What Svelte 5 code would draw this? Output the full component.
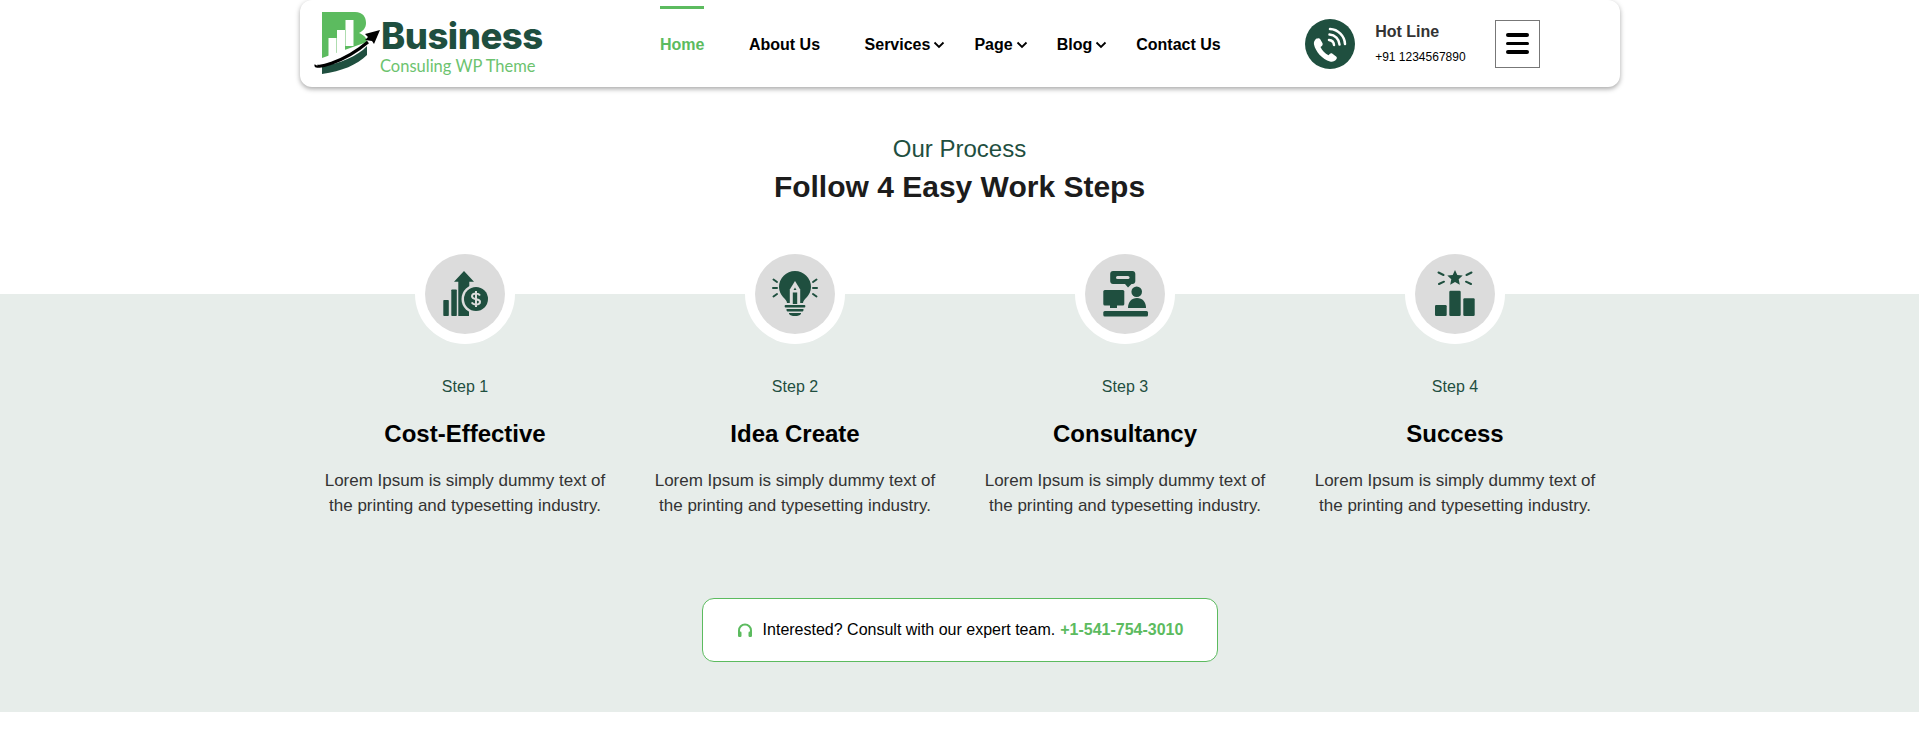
<script>
  const navItems = [
    { label: "Home", active: true },
    { label: "About Us" },
    { label: "Services", sub: true },
    { label: "Page", sub: true },
    { label: "Blog", sub: true },
    { label: "Contact Us" },
  ];

  const steps = [
    { id: 1, title: "Cost-Effective" },
    { id: 2, title: "Idea Create" },
    { id: 3, title: "Consultancy" },
    { id: 4, title: "Success" },
  ];
</script>

<header class="site-header">
  <a class="logo" href="#top" aria-label="Business">
    <svg viewBox="310 8 71 72" width="71" height="72">
      <path class="lg" d="M322 12h33c8 0 11 5 11 11 0 5-3 8-7 10 5 2 8 5 8 9l-45 16z" />
      <rect class="w" x="328.500" y="38" width="8" height="20" />
      <rect class="w" x="337" y="30" width="8" height="24" />
      <rect class="w" x="345.500" y="20" width="8" height="26" />
      <path class="dg" d="M322 74c20-3 35-9 45-19v-9c-9 10-28 18-45 20z" />
      <path class="bk-line" d="M316 65c-2 4 26-1 52-23" />
      <path class="bk" d="M380 30l-15 4 3 3-3 3 7 1 2 3z" />
    </svg>
    <div class="logo-text">
      <span class="brand">Business</span>
      <span class="tag">Consuling WP Theme</span>
    </div>
  </a>

  <nav class="main-nav">
    {#each navItems as item}
      <a class="nav-link" class:active={item.active} class:sub={item.sub} href="#top">
        {item.label}
        {#if item.sub}
          <svg class="chev" viewBox="0 0 12 8" width="12" height="8"><path d="M1.500 1.500L6 6l4.500-4.500" /></svg>
        {/if}
      </a>
    {/each}
  </nav>

  <div class="hotline">
    <span class="phone-badge">
      <svg viewBox="0 0 50 50" width="50" height="50">
        <path class="handset" transform="translate(-3.500 4)" d="M15 15.500c-2 1.500-3 3.500-2.500 6 1.500 7 8.500 15 16 17 2.500.7 5-.3 6.500-2.500.7-1 .4-2-.4-2.600l-3.600-2.600c-1-.7-2-.6-2.800.2l-1.200 1.300c-3.500-1.500-6.500-5-8-8.300l1.400-1.100c.9-.8 1-1.800.5-2.800l-2.300-4c-.6-1-1.700-1.200-2.600-.6z" />
        <path class="arc" d="M24 21c2.800.3 4.800 2.300 5 5" />
        <path class="arc" d="M24.500 15.500c5.500.3 9.700 4.500 10 10" />
        <path class="arc" d="M25 10c8 .3 14.700 7 15 15" />
      </svg>
    </span>
    <div class="hotline-text">
      <strong>Hot Line</strong>
      <span>+91 1234567890</span>
    </div>
    <button class="menu-toggle" aria-label="Menu">
      <i></i><i></i><i></i>
    </button>
  </div>
</header>

<section class="heading">
  <p>Our Process</p>
  <h2>Follow 4 Easy Work Steps</h2>
</section>

<section class="band">
  <div class="steps">
    {#each steps as step}
      <article class="step">
        <div class="ring">
          <div class="disc">
            <svg viewBox="0 0 80 80" width="80" height="80">
              {#if step.id === 1}
                <rect x="18.300" y="46" width="5.500" height="16" rx=".8" />
                <rect x="26.300" y="35.500" width="5.500" height="26.500" rx=".8" />
                <path d="M39 17l10 10.700h-4.700V62h-11V27.700H29z" />
                <circle class="cut" cx="51" cy="45" r="14.500" />
                <path class="cut" d="M44 55h6v8h-6z" />
                <circle cx="51" cy="45" r="12" />
                <path class="dollar" d="M55 41.500c-.8-1.500-2.200-2-4-2-2.300 0-4 1-4 2.800 0 4 8 2 8 5.500 0 1.800-1.800 2.800-4 2.800-2 0-3.400-.7-4.200-2.200M51 37v16" />
              {:else if step.id === 2}
                <path d="M32 49c0-4-8-7-8-16a16 16 0 0 1 32 0c0 9-8 12-8 16z" />
                <path class="cut" d="M40 27l-5.200 8.500V50h10.400V35.500z" />
                <path d="M40 33.500l-1.500 2.500h3zM37.800 38.500h4.400V50h-4.400z" />
                <path d="M30.500 51h19c.5 0 .8.400.8.800v1c0 .5-.3.800-.8.800h-19c-.5 0-.8-.3-.8-.8v-1c0-.4.300-.8.800-.8zM32 55h16c.4 0 .7.300.6.700l-.4 1.400c-.1.300-.4.500-.7.500H32.500c-.3 0-.6-.2-.7-.5l-.4-1.400c-.1-.4.200-.7.600-.7zM34.500 59h11c.5 0 .7.500.4.900-1 1.300-3 2.100-5.900 2.100s-4.900-.8-5.900-2.100c-.3-.4-.1-.9.400-.9z" />
                <path class="ray" d="M18.500 25.500l3.500 2.500M18 34h4M18.500 42.500l3.500-2.500M61.500 25.500L58 28M62 34h-4M61.500 42.500L58 40" />
              {:else if step.id === 3}
                <path d="M28 17h19.500c1.600 0 2.800 1.200 2.800 2.800v7.400c0 1.600-1.200 2.800-2.800 2.800H46.500L43 33.500 40 30H28c-1.600 0-2.800-1.200-2.800-2.800v-7.400c0-1.600 1.200-2.800 2.800-2.800z" />
                <rect class="cut" x="31" y="22" width="13.500" height="3" rx="1.500" />
                <rect x="18.300" y="36" width="21" height="15.500" rx="1.500" />
                <path d="M25 50h7v4h-7z" />
                <circle cx="51.700" cy="37.700" r="5.300" />
                <path d="M43 54c0-6 3.500-10 9-10s9 4 9 10z" />
                <rect x="18.300" y="57" width="44.700" height="5.500" rx="1.500" />
              {:else}
                <path d="M40 16l2.300 5 5.400.6-4 3.700 1.100 5.400-4.800-2.700-4.800 2.700 1.100-5.400-4-3.700 5.400-.6z" />
                <path class="ray" d="M23.500 18.500l5 2.500M24 30l5-2.300M56.500 18.500l-5 2.500M56 30l-5-2.300" />
                <rect x="20" y="51" width="11.700" height="11" rx="1.200" />
                <rect x="34.300" y="36.700" width="11.400" height="25.300" rx="1.200" />
                <rect x="48.300" y="44.300" width="11.400" height="17.700" rx="1.200" />
              {/if}
            </svg>
          </div>
        </div>
        <span class="step-no">Step {step.id}</span>
        <h3>{step.title}</h3>
        <p>Lorem Ipsum is simply dummy text of the printing and typesetting industry.</p>
      </article>
    {/each}
  </div>

  <div class="cta">
    <svg class="headset" viewBox="0 0 16 16" width="16" height="16">
      <path class="band-arc" d="M2 11V8.500a6 6 0 0 1 12 0V11" />
      <rect x="1" y="9.500" width="3.500" height="5.500" rx="1.200" />
      <rect x="11.500" y="9.500" width="3.500" height="5.500" rx="1.200" />
    </svg>
    <span>Interested? Consult with our expert team.</span>
    <a href="#top">+1-541-754-3010</a>
  </div>
</section>

<style>
  :global(body) {
    background: #fff;
    font-family: "Liberation Sans", Arial, sans-serif;
    color: #000;
  }

  .site-header {
    width: 1320px;
    height: 87px;
    margin: 0 0 0 300px;
    box-sizing: border-box;
    display: flex;
    align-items: center;
    background: #fff;
    border-radius: 12px;
    box-shadow: 0 2px 5px rgba(0, 0, 0, 0.35);
  }

  .logo {
    display: flex;
    width: 240px;
    height: 72px;
    margin-left: 10px;
    margin-top: 1px;
    flex: none;
    text-decoration: none;
  }

  .logo svg {
    display: block;
    flex: none;
  }

  .logo-text {
    display: flex;
    flex-direction: column;
    gap: 5px;
    padding-top: 13px;
  }

  .lg {
    fill: #5cbb5f;
  }

  .w {
    fill: #fff;
  }

  .dg {
    fill: #1f4f3f;
  }

  .bk {
    fill: #000;
  }

  .bk-line {
    fill: none;
    stroke: #000;
    stroke-width: 3;
  }

  .brand {
    font-family: Inter, sans-serif;
    font-weight: 800;
    font-size: 36.500px;
    line-height: 30px;
    letter-spacing: -0.5px;
    color: #1f4f3f;
  }

  .tag {
    margin-left: -1px;
    font-family: Lato, sans-serif;
    font-weight: 400;
    font-size: 16.500px;
    line-height: 20px;
    color: #6cc36f;
  }

  .main-nav {
    display: flex;
    align-items: stretch;
    height: 87px;
    margin-left: 110px;
    flex: none;
  }

  .nav-link {
    display: flex;
    align-items: center;
    gap: 3px;
    margin-right: 44.500px;
    font-size: 16px;
    font-weight: 700;
    color: #000;
    text-decoration: none;
    border-top: 3px solid transparent;
    box-sizing: border-box;
    margin-top: 6px;
    height: 75px;
    padding-bottom: 1px;
  }

  .nav-link.sub {
    margin-right: 29px;
  }

  .nav-link.active {
    color: #5cbb5f;
    border-top-color: #5cbb5f;
  }

  .chev {
    margin-top: 1px;
  }

  .chev path {
    fill: none;
    stroke: #000;
    stroke-width: 1.800;
  }

  .hotline {
    display: flex;
    align-items: center;
    margin-left: 40px;
  }

  .phone-badge {
    width: 50px;
    height: 50px;
    border-radius: 50%;
    background: #1f4f3f;
    flex: none;
  }

  .phone-badge svg {
    display: block;
  }

  .handset {
    fill: #fff;
  }

  .arc {
    fill: none;
    stroke: #fff;
    stroke-width: 2.500;
    stroke-linecap: round;
  }

  .hotline-text {
    display: flex;
    flex-direction: column;
    gap: 9px;
    width: 120px;
    margin-left: 20px;
  }

  .hotline-text strong {
    font-size: 16px;
    line-height: 18px;
    color: #333;
  }

  .hotline-text span {
    font-size: 12px;
    line-height: 14px;
    color: #000;
  }

  .menu-toggle {
    width: 45px;
    height: 48px;
    padding: 0;
    background: #fff;
    border: 1px solid #777;
    display: flex;
    flex-direction: column;
    align-items: center;
    justify-content: center;
    gap: 5px;
  }

  .menu-toggle i {
    display: block;
    width: 23px;
    height: 3.500px;
    border-radius: 2px;
    background: #000;
  }

  .heading {
    height: 207px;
    box-sizing: border-box;
    padding-top: 48px;
    text-align: center;
  }

  .heading p {
    margin: 0;
    font-size: 24px;
    line-height: 28px;
    color: #1f4f3f;
  }

  .heading h2 {
    margin: 6px 0 0;
    font-size: 30px;
    line-height: 36px;
    font-weight: 700;
    color: #1c1c1c;
  }

  .band {
    height: 418px;
    background: #e7edea;
  }

  .steps {
    width: 1320px;
    margin-left: 300px;
    display: grid;
    grid-template-columns: repeat(4, 1fr);
  }

  .step {
    display: flex;
    flex-direction: column;
    align-items: center;
    text-align: center;
  }

  .ring {
    width: 100px;
    height: 100px;
    margin-top: -50px;
    box-sizing: border-box;
    padding: 10px;
    border-radius: 50%;
    background: #fff;
  }

  .disc {
    width: 80px;
    height: 80px;
    border-radius: 50%;
    background: #dcdcdc;
  }

  .disc svg {
    display: block;
    fill: #1f4f3f;
  }

  .disc .cut {
    fill: #dcdcdc;
  }

  .dollar {
    fill: none;
    stroke: #dcdcdc;
    stroke-width: 2;
  }

  .ray {
    fill: none;
    stroke: #1f4f3f;
    stroke-width: 2;
    stroke-linecap: round;
  }

  .step-no {
    margin-top: 33px;
    font-size: 16px;
    line-height: 20px;
    color: #1f4f3f;
  }

  .step h3 {
    margin: 23px 0 0;
    font-size: 24px;
    line-height: 28px;
    font-weight: 700;
    color: #000;
  }

  .step p {
    width: 300px;
    margin: 20px 0 0;
    font-size: 17px;
    line-height: 25px;
    color: #333;
  }

  .cta {
    width: 516px;
    height: 64px;
    box-sizing: border-box;
    margin: 80px 0 0 702px;
    display: flex;
    align-items: center;
    justify-content: center;
    gap: 5px;
    background: #fff;
    border: 1px solid #5cbb5f;
    border-radius: 12px;
    font-size: 16px;
    color: #000;
  }

  .headset {
    margin-right: 5px;
    fill: #5cbb5f;
  }

  .band-arc {
    fill: none;
    stroke: #5cbb5f;
    stroke-width: 2;
  }

  .cta a {
    color: #5cbb5f;
    font-weight: 700;
    text-decoration: none;
  }
</style>
